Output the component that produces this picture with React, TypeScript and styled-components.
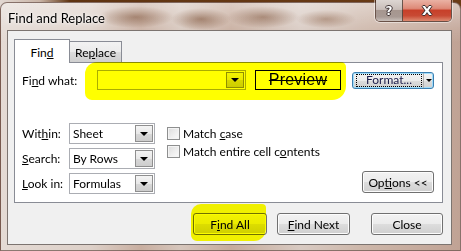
import React from "react";
import styled, { createGlobalStyle, css } from "styled-components";

const GlobalStyle = createGlobalStyle`
  html, body {
    margin: 0;
    padding: 0;
    width: 461px;
    height: 251px;
    overflow: hidden;
    background: linear-gradient(90deg, #e2d8d2 0px, #c9b4a6 40px, #5f3411 70px, #6a3b16 100%);
  }
  * { box-sizing: border-box; }
`;

const uiFont = `"Lato", "Liberation Sans", sans-serif`;

const Window = styled.div`
  position: relative;
  width: 461px;
  height: 249px;
  margin-top: 2px;
  display: flex;
  flex-direction: column;
  border-radius: 7px 7px 0 0;
  border: 1px solid rgba(60, 30, 20, 0.55);
  background:
    linear-gradient(180deg, rgba(255, 255, 255, 0.4) 0px, rgba(255, 255, 255, 0.1) 26px, rgba(255, 255, 255, 0) 40px),
    radial-gradient(ellipse 38px 11px at 135px 14px, rgba(110, 60, 30, 0.7), transparent),
    radial-gradient(ellipse 30px 11px at 200px 16px, rgba(110, 60, 30, 0.7), transparent),
    radial-gradient(ellipse 36px 11px at 262px 14px, rgba(110, 60, 30, 0.65), transparent),
    radial-gradient(ellipse 30px 9px at 325px 16px, rgba(120, 70, 40, 0.55), transparent),
    linear-gradient(90deg, #e4dad4 0px, #ddd0c8 90px, #c8aea0 140px, #d6c6bc 180px, #c6ab9c 230px, #d8cac2 300px, #cdb7aa 360px, #c0a294 461px);
`;

const TitleBar = styled.div`
  height: 27px;
  display: flex;
  justify-content: space-between;
  align-items: flex-start;
`;

const Title = styled.div`
  font-family: ${uiFont};
  font-size: 13px;
  color: #000;
  padding: 7px 0 0 7px;
  text-shadow: 0 0 6px rgba(255, 255, 255, 0.95), 0 0 3px rgba(255, 255, 255, 0.9);
`;

const CaptionButtons = styled.div`
  display: flex;
  margin-right: 8px;
  margin-top: -3px;
  border: 1px solid rgba(70, 45, 35, 0.75);
  border-top: none;
  border-radius: 0 0 5px 5px;
  overflow: hidden;
  box-shadow: 0 0 0 1px rgba(255, 255, 255, 0.45);
`;

const CaptionButton = styled.div<{ $close?: boolean }>`
  height: 21px;
  width: ${(p) => (p.$close ? "48px" : "27px")};
  display: flex;
  align-items: center;
  justify-content: center;
  font-family: "DejaVu Sans", sans-serif;
  font-weight: bold;
  font-size: ${(p) => (p.$close ? "13px" : "12px")};
  color: #fff;
  text-shadow: -1px 0 #3c3030, 1px 0 #3c3030, 0 -1px #3c3030, 0 1px #3c3030;
  ${(p) =>
    p.$close
      ? css`
          background: linear-gradient(180deg, #eab2a4 0%, #de8a78 40%, #c7402a 50%, #c84a34 75%, #dd8a70 100%);
        `
      : css`
          background: linear-gradient(180deg, #ddd6d2 0%, #c8bdb8 45%, #a6968f 50%, #a89a94 80%, #c9c0bb 100%);
          border-right: 1px solid rgba(70, 45, 35, 0.75);
        `}
`;

const Client = styled.div`
  flex: 1;
  margin: 0 8px 5px 6px;
  background: #f0f0f0;
  border: 1px solid #7c7470;
  padding: 8px 8px 0 6px;
  display: flex;
  flex-direction: column;
  font-family: ${uiFont};
  font-size: 12px;
  color: #000;
`;

const TabRow = styled.div`
  display: flex;
  align-items: flex-end;
  height: 23px;
`;

const Tab = styled.div<{ $active?: boolean }>`
  display: flex;
  align-items: center;
  justify-content: center;
  border: 1px solid #898c95;
  border-bottom: none;
  position: relative;
  ${(p) =>
    p.$active
      ? css`
          width: 56px;
          height: 24px;
          margin-bottom: -1px;
          background: #fff;
          z-index: 1;
          padding-top: 1px;
        `
      : css`
          width: 53px;
          height: 21px;
          margin-left: -1px;
          background: linear-gradient(180deg, #f2f2f2 0%, #ebebeb 50%, #dddddd 51%, #cfcfcf 100%);
        `}
`;

const Panel = styled.div`
  height: 141px;
  background: #fff;
  border: 1px solid #898c95;
  padding: 7px 8px 8px 7px;
  display: flex;
  flex-direction: column;
`;

const FindRow = styled.div`
  display: flex;
  align-items: center;
  height: 20px;
`;

const Label = styled.span<{ $w: number }>`
  width: ${(p) => p.$w}px;
  flex: none;
  white-space: nowrap;
`;

const Combo = styled.div<{ $w: number }>`
  width: ${(p) => p.$w}px;
  height: 100%;
  border: 1px solid #abadb3;
  background: #fff;
  display: flex;
  align-items: stretch;
  flex: none;
`;

const ComboText = styled.span`
  flex: 1;
  display: flex;
  align-items: center;
  padding-left: 3px;
  white-space: nowrap;
`;

const DropButton = styled.div`
  width: 18px;
  margin: 1px;
  border: 1px solid #8f8f8f;
  background: linear-gradient(180deg, #f4f4f4 0%, #e8e8e8 50%, #d8d8d8 51%, #cdcdcd 100%);
  display: flex;
  align-items: center;
  justify-content: center;
`;

const Arrow = styled.span<{ $size?: number }>`
  width: 0;
  height: 0;
  border-left: ${(p) => p.$size ?? 4}px solid transparent;
  border-right: ${(p) => p.$size ?? 4}px solid transparent;
  border-top: ${(p) => p.$size ?? 4}px solid #000;
`;

const Preview = styled.div`
  width: 86px;
  height: 20px;
  margin-left: 9px;
  border: 1.5px solid #000;
  display: flex;
  align-items: center;
  justify-content: center;
  font-family: "Liberation Sans", sans-serif;
  font-size: 16px;
  letter-spacing: 0.2px;
  text-decoration: line-through;
  flex: none;
`;

const FormatButton = styled.div`
  margin-left: 11px;
  width: 82px;
  height: 17px;
  display: flex;
  border: 1px solid #3c7fb1;
  border-radius: 3px;
  box-shadow: inset 0 0 0 1px #9edcfb;
  background: linear-gradient(180deg, #f2f2f2 0%, #ebebeb 50%, #dddddd 51%, #cfcfcf 100%);
  color: #1b1b4a;
  font-size: 12px;
`;

const FormatLabel = styled.div`
  flex: 1;
  margin: 1px 0 1px 3px;
  border: 1px dotted #000;
  display: flex;
  align-items: center;
  justify-content: center;
  line-height: 12px;
`;

const FormatDrop = styled.div`
  width: 10px;
  display: flex;
  align-items: center;
  justify-content: center;
  border-left: 1px solid #b0b0b0;
  margin-left: 1px;
`;

const Lower = styled.div`
  margin-top: auto;
  display: flex;
  align-items: flex-start;
`;

const OptionGrid = styled.div`
  display: grid;
  grid-template-columns: 47px 86px;
  grid-auto-rows: 21px;
  row-gap: 4px;
  align-items: center;
`;

const Checks = styled.div`
  margin-left: 12px;
  margin-top: 4px;
  display: flex;
  flex-direction: column;
  gap: 5px;
`;

const CheckRow = styled.label`
  display: flex;
  align-items: center;
  gap: 3px;
  height: 13px;
  white-space: nowrap;
`;

const CheckBox = styled.span`
  width: 13px;
  height: 13px;
  flex: none;
  border: 1px solid #8e8f8f;
  background: linear-gradient(135deg, #dcdcdc 0%, #f0f0f0 60%, #fafafa 100%);
  box-shadow: inset 0 0 0 1px #f4f4f4;
`;

const Button = styled.div<{ $w: number; $gap?: number }>`
  width: ${(p) => p.$w}px;
  margin-left: ${(p) => p.$gap ?? 0}px;
  height: 22px;
  border: 1px solid #707070;
  border-radius: 3px;
  box-shadow: inset 0 0 0 1px #fcfcfc;
  background: linear-gradient(180deg, #f2f2f2 0%, #ebebeb 50%, #dddddd 51%, #cfcfcf 100%);
  display: flex;
  align-items: center;
  justify-content: center;
  white-space: nowrap;
  flex: none;
`;

const OptionsButton = styled(Button)`
  margin-left: auto;
  align-self: flex-end;
  margin-bottom: 1px;
`;

const ButtonRow = styled.div`
  display: flex;
  justify-content: flex-end;
  margin-top: 10px;
`;

const Marker = styled.div`
  position: absolute;
  background: #ffff00;
  mix-blend-mode: multiply;
  pointer-events: none;
`;

const Combobox = ({ w, value }: { w: number; value: string }) => (
  <Combo $w={w}>
    <ComboText>{value}</ComboText>
    <DropButton>
      <Arrow />
    </DropButton>
  </Combo>
);

export default function App() {
  return (
    <>
      <GlobalStyle />
      <Window>
        <TitleBar>
          <Title>Find and Replace</Title>
          <CaptionButtons>
            <CaptionButton>?</CaptionButton>
            <CaptionButton $close>X</CaptionButton>
          </CaptionButtons>
        </TitleBar>
        <Client>
          <TabRow>
            <Tab $active>
              <span>
                Fin<u>d</u>
              </span>
            </Tab>
            <Tab>
              <span>
                Re<u>p</u>lace
              </span>
            </Tab>
          </TabRow>
          <Panel>
            <FindRow>
              <Label $w={75}>
                Fi<u>n</u>d what:
              </Label>
              <Combobox w={149} value="" />
              <Preview>Preview</Preview>
              <FormatButton>
                <FormatLabel>Format...</FormatLabel>
                <FormatDrop>
                  <Arrow $size={3} />
                </FormatDrop>
              </FormatButton>
            </FindRow>
            <Lower>
              <OptionGrid>
                <Label $w={47}>
                  Wit<u>h</u>in:
                </Label>
                <Combobox w={86} value="Sheet" />
                <Label $w={47}>
                  <u>S</u>earch:
                </Label>
                <Combobox w={86} value="By Rows" />
                <Label $w={47}>
                  <u>L</u>ook in:
                </Label>
                <Combobox w={86} value="Formulas" />
              </OptionGrid>
              <Checks>
                <CheckRow>
                  <CheckBox />
                  <span>
                    Match <u>c</u>ase
                  </span>
                </CheckRow>
                <CheckRow>
                  <CheckBox />
                  <span>
                    Match entire cell c<u>o</u>ntents
                  </span>
                </CheckRow>
              </Checks>
              <OptionsButton $w={72}>
                <span>
                  Op<u>t</u>ions &lt;&lt;
                </span>
              </OptionsButton>
            </Lower>
          </Panel>
          <ButtonRow>
            <Button $w={74}>
              <span>
                F<u>i</u>nd All
              </span>
            </Button>
            <Button $w={73} $gap={10}>
              <span>
                <u>F</u>ind Next
              </span>
            </Button>
            <Button $w={72} $gap={21}>
              Close
            </Button>
          </ButtonRow>
        </Client>
        <Marker style={{ left: 84, top: 59, width: 261, height: 38, borderRadius: "12px 5px 14px 7px" }} />
        <Marker style={{ left: 190, top: 201, width: 75, height: 37, borderRadius: "10px 4px 12px 6px" }} />
      </Window>
    </>
  );
}
